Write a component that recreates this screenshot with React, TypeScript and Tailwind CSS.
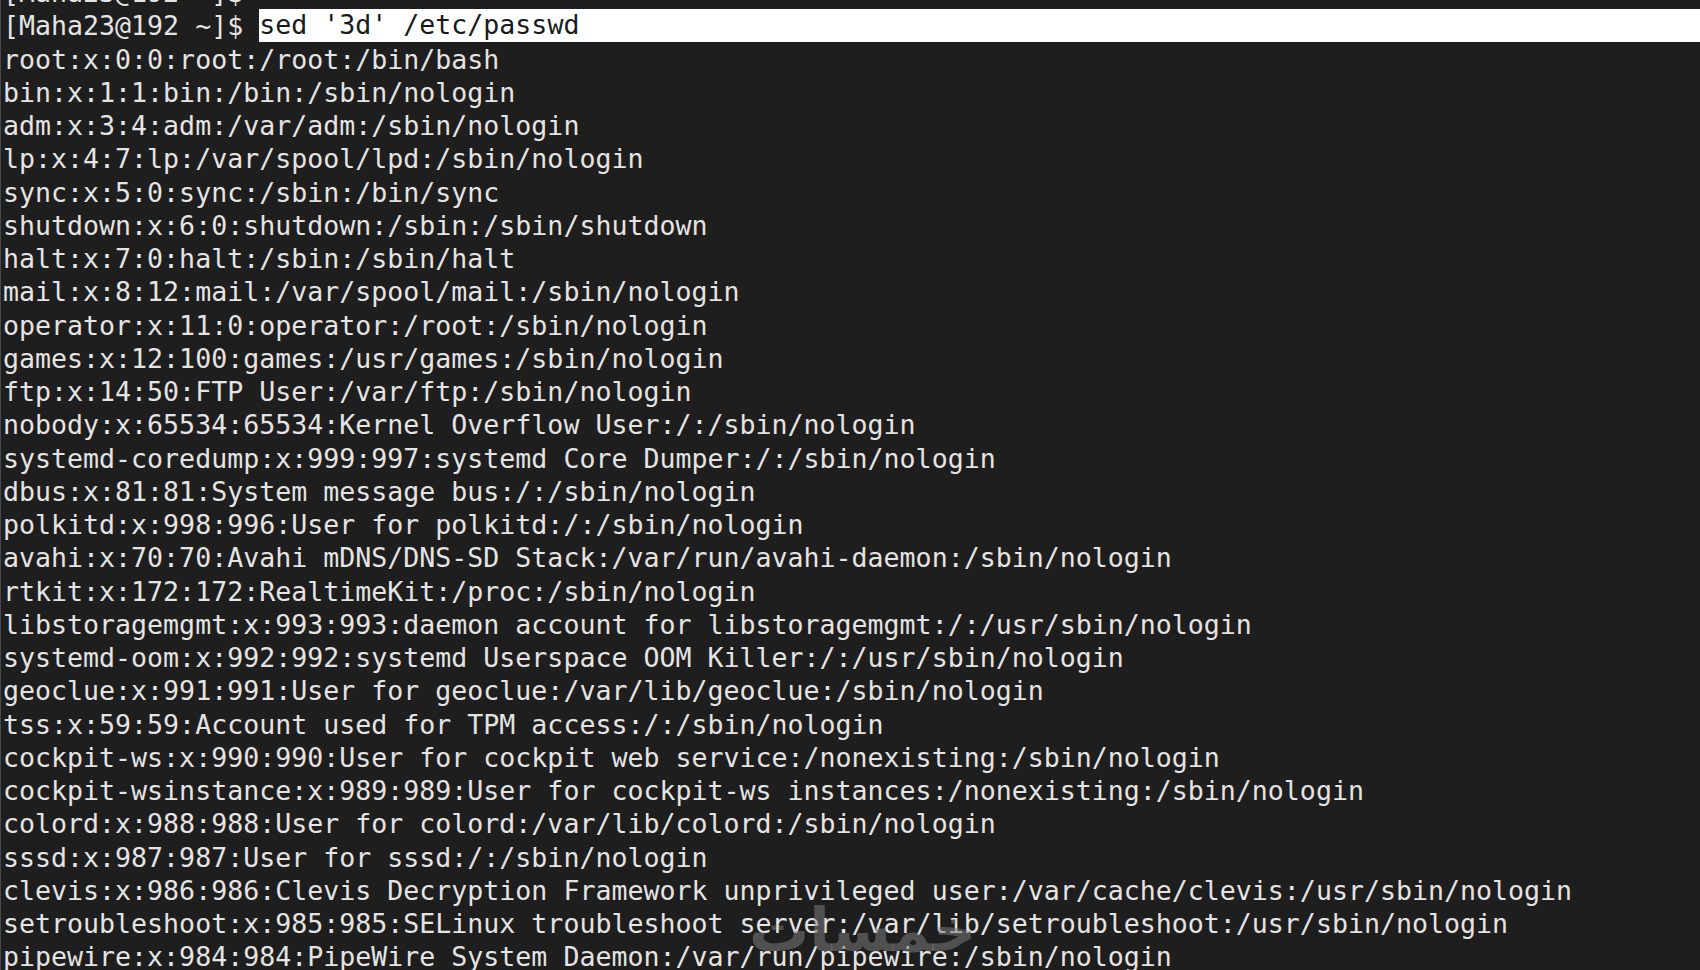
const prompt = "[Maha23@192 ~]$ ";
const command = "sed '3d' /etc/passwd";

const passwdLines = [
  "root:x:0:0:root:/root:/bin/bash",
  "bin:x:1:1:bin:/bin:/sbin/nologin",
  "adm:x:3:4:adm:/var/adm:/sbin/nologin",
  "lp:x:4:7:lp:/var/spool/lpd:/sbin/nologin",
  "sync:x:5:0:sync:/sbin:/bin/sync",
  "shutdown:x:6:0:shutdown:/sbin:/sbin/shutdown",
  "halt:x:7:0:halt:/sbin:/sbin/halt",
  "mail:x:8:12:mail:/var/spool/mail:/sbin/nologin",
  "operator:x:11:0:operator:/root:/sbin/nologin",
  "games:x:12:100:games:/usr/games:/sbin/nologin",
  "ftp:x:14:50:FTP User:/var/ftp:/sbin/nologin",
  "nobody:x:65534:65534:Kernel Overflow User:/:/sbin/nologin",
  "systemd-coredump:x:999:997:systemd Core Dumper:/:/sbin/nologin",
  "dbus:x:81:81:System message bus:/:/sbin/nologin",
  "polkitd:x:998:996:User for polkitd:/:/sbin/nologin",
  "avahi:x:70:70:Avahi mDNS/DNS-SD Stack:/var/run/avahi-daemon:/sbin/nologin",
  "rtkit:x:172:172:RealtimeKit:/proc:/sbin/nologin",
  "libstoragemgmt:x:993:993:daemon account for libstoragemgmt:/:/usr/sbin/nologin",
  "systemd-oom:x:992:992:systemd Userspace OOM Killer:/:/usr/sbin/nologin",
  "geoclue:x:991:991:User for geoclue:/var/lib/geoclue:/sbin/nologin",
  "tss:x:59:59:Account used for TPM access:/:/sbin/nologin",
  "cockpit-ws:x:990:990:User for cockpit web service:/nonexisting:/sbin/nologin",
  "cockpit-wsinstance:x:989:989:User for cockpit-ws instances:/nonexisting:/sbin/nologin",
  "colord:x:988:988:User for colord:/var/lib/colord:/sbin/nologin",
  "sssd:x:987:987:User for sssd:/:/sbin/nologin",
  "clevis:x:986:986:Clevis Decryption Framework unprivileged user:/var/cache/clevis:/usr/sbin/nologin",
  "setroubleshoot:x:985:985:SELinux troubleshoot server:/var/lib/setroubleshoot:/usr/sbin/nologin",
  "pipewire:x:984:984:PipeWire System Daemon:/var/run/pipewire:/sbin/nologin",
];

const App = () => {
  return (
    <div className="relative h-[970px] w-full overflow-hidden bg-[#1e1e1e] border-l border-[#4a4a4a] font-['DejaVu_Sans_Mono',monospace] text-[26.6px] leading-[33.25px] text-[#e4e4e4]">
      <div className="flex flex-col pl-[2px]">
        {/* previous prompt, scrolled mostly off screen */}
        <div className="mt-[-24px] h-[33.25px] whitespace-pre">{prompt}</div>

        {/* current command */}
        <div className="flex h-[33.25px] items-start whitespace-pre">
          <span>{prompt}</span>
          <span className="h-[32.5px] flex-1 bg-white leading-[32.5px] text-[#1a1a1a]">
            {command}
          </span>
        </div>

        {passwdLines.map((line) => (
          <div key={line} className="h-[33.25px] whitespace-pre">
            {line}
          </div>
        ))}
      </div>

      {/* site watermark */}
      <div
        dir="rtl"
        className="pointer-events-none absolute left-[748px] top-[900px] font-['DejaVu_Sans',sans-serif] text-[60px] font-bold leading-none text-[#7a7a7a]/55"
      >
        خمسات
      </div>
    </div>
  );
};

export default App;
